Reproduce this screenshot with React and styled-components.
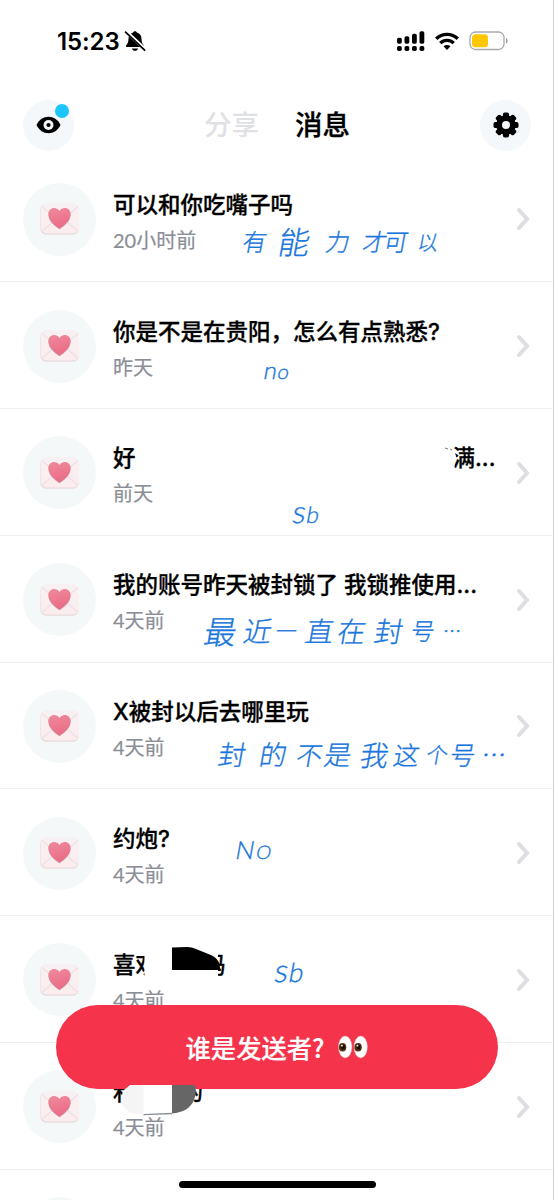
import React from "react";
import styled, { createGlobalStyle } from "styled-components";

const messages = [
  {
    title: ["可以和你吃嘴子吗"],
    time: "20小时前",
    note: { x: 243, y: 67, size: 24, marks: [["有", 0], ["能", 12, 1.3], ["力", 16], ["才", 13], ["可", -3], ["以", 10, 0.85]] },
  },
  {
    title: ["你是不是在贵阳，怎么有点熟悉?"],
    time: "昨天",
    note: { x: 264, y: 70, size: 24, latin: true, marks: [["n", 0], ["o", 1, 0.85]] },
  },
  {
    title: ["好", "满..."],
    gap: 317,
    time: "前天",
    note: { x: 293, y: 84, size: 24, latin: true, marks: [["s", 0, 1.3], ["b", 1, 0.95]] },
  },
  {
    title: ["我的账号昨天被封锁了 我锁推使用..."],
    time: "4天前",
    note: { x: 205, y: 76, size: 28, marks: [["最", 0, 1.15], ["近", 7], ["一", 4, 0.75], ["直", 9], ["在", 4], ["封", 9], ["号", 8, 0.85], ["…", 8, 0.65]] },
  },
  {
    title: ["X被封以后去哪里玩"],
    time: "4天前",
    note: { x: 219, y: 73, size: 27, marks: [["封", 0], ["的", 14], ["不", 10, 0.95], ["是", 2], ["我", 9, 1.05], ["这", 5, 0.95], ["个", 7, 0.8], ["号", 2, 0.95], ["…", 6, 0.9]] },
  },
  {
    title: ["约炮?"],
    time: "4天前",
    note: { x: 236, y: 42, size: 25, latin: true, marks: [["N", 0], ["O", 2, 0.75]] },
  },
  {
    title: ["喜欢", "吗"],
    gap: 45,
    time: "4天前",
    note: { x: 275, y: 36, size: 28, latin: true, marks: [["s", 0, 1.15], ["b", 1, 0.95]] },
  },
  { title: ["和", "的"], gap: 45, time: "4天前" },
  { title: [""], time: "" },
];

const BellOff = () => (
  <svg width="22" height="22" viewBox="0 0 22 22">
    <path d="M11 1.2c1 0 1.7.6 1.9 1.4 3 .8 4.5 3.2 4.6 6.2.1 3.5.9 4.8 2.2 6.4.6.8.3 1.8-.8 1.8H3.1c-1.1 0-1.4-1-.8-1.8C3.6 13.6 4.4 12.3 4.5 8.8c.1-3 1.6-5.4 4.6-6.2.2-.8.9-1.4 1.9-1.4z" />
    <path d="M8 18.4h6c-.4 1.500-1.500 2.400-3 2.400s-2.600-.9-3-2.400z" />
    <path d="M1.800 1.300 21 19.300" stroke="#fff" strokeWidth="3.600" />
    <path d="M1.600 2.200 20.600 20.200" stroke="#000" strokeWidth="1.800" strokeLinecap="round" />
  </svg>
);

const Signal = () => (
  <svg width="29" height="21" viewBox="0 0 29 21">
    {[6, 7.5, 10, 12.5].map((h, i) => (
      <g key={h}>
        <rect x={1 + i * 7.5} y={12.7 - h} width="4.8" height={h} rx="1.7" />
        <rect x={1 + i * 7.5} y="15" width="4.8" height="5" rx="1.7" />
      </g>
    ))}
  </svg>
);

const Wifi = () => (
  <svg width="24" height="19" viewBox="0 0 24 19">
    <g fill="none" stroke="#000" strokeWidth="3.4">
      <path d="M1.2 6.8C7.3.9 16.7.9 22.8 6.8" />
      <path d="M5.3 11.1C9.1 7.4 14.9 7.4 18.7 11.1" />
    </g>
    <path d="M8.500 14.300c2-1.800 5-1.800 7 0L12 17.900z" />
  </svg>
);

const Battery = () => (
  <svg width="40" height="20" viewBox="0 0 40 20">
    <rect x="1" y="1" width="34" height="17.5" rx="5.5" fill="#fff" stroke="#a8a8a8" strokeWidth="1.3" />
    <rect x="3" y="3.2" width="16" height="13" rx="3.5" fill="#ffc700" />
    <path d="M37 7v5.600c2.200-.9 2.200-4.700 0-5.600z" fill="#999" />
  </svg>
);

const Eye = () => (
  <svg width="25" height="18" viewBox="0 0 25 18">
    <path d="M.5 9C3.200 3.500 7.500.8 12.500.8S21.800 3.500 24.500 9c-2.700 5.500-7 8.200-12 8.200S3.200 14.500.5 9z" />
    <circle cx="12.5" cy="9" r="5" fill="#f5f8fa" />
    <circle cx="12.5" cy="9" r="2.1" />
  </svg>
);

const Gear = () => (
  <svg width="26" height="26" viewBox="-13 -13 26 26">
    {[0, 45, 90, 135].map((a) => (
      <rect key={a} x="-3.1" y="-12.5" width="6.2" height="25" rx="1.9" transform={`rotate(${a})`} />
    ))}
    <circle r="9.8" />
    <circle r="4" fill="#f5f8fa" />
  </svg>
);

const LoveLetter = () => (
  <svg width="40" height="34" viewBox="0 0 40 34">
    <defs>
      <linearGradient id="paper" x1="0" y1="0" x2="0" y2="1">
        <stop offset="0" stopColor="#f7f1f3" />
        <stop offset="1" stopColor="#fcecee" />
      </linearGradient>
      <linearGradient id="heart" x1="0" y1="0" x2="0.3" y2="1">
        <stop offset="0" stopColor="#ef8a9c" />
        <stop offset="1" stopColor="#ea6c86" />
      </linearGradient>
    </defs>
    <rect x="0.3" y="1.8" width="38.5" height="31" rx="6" fill="#e6dadc" />
    <rect x="0.8" y="1" width="38.2" height="30.5" rx="6" fill="url(#paper)" />
    <path d="M2 4.500 18 18q2 1.500 4 0L38 4.500M2.500 29 15 18M37.500 29 25 18" fill="none" stroke="#eee0e3" strokeWidth="1.3" />
    <path d="M19.500 27.300C13.500 23.500 8.500 18.500 8.500 12.700c0-6.500 7.300-8.400 11-3.200 3.700-5.200 11-3.300 11 3.200 0 5.800-5 10.800-11 14.600z" fill="#cf96a1" />
    <path d="M19.500 26.400C13.500 22.600 8.500 17.600 8.500 12.100c0-6.300 7.300-8.200 11-3.200 3.700-5 11-3.100 11 3.200 0 5.500-5 10.500-11 14.300z" fill="url(#heart)" />
  </svg>
);

const Chevron = () => (
  <svg width="14" height="24" viewBox="0 0 14 24">
    <path d="M3 3l8 9-8 9" fill="none" stroke="#dcdee1" strokeWidth="4" strokeLinecap="round" />
  </svg>
);

const Peek = () => (
  <svg width="30" height="24" viewBox="0 0 30 24">
    {[0, 15.5].map((x) => (
      <g key={x} transform={`translate(${x} 0)`}>
        <ellipse cx="7.2" cy="12" rx="6.7" ry="11" fill="#fff" stroke="#dcaeb4" strokeWidth="0.5" />
        <ellipse cx="4.6" cy="12.3" rx="3.7" ry="4.3" fill="#54310e" />
        <ellipse cx="5" cy="12" rx="2" ry="2.6" fill="#160b04" />
        <circle cx="4" cy="10.7" r="0.9" fill="#fff" />
      </g>
    ))}
  </svg>
);

const Message = ({ title, gap, time, note }) => {
  return (
    <Row>
      <Avatar>
        <LoveLetter />
      </Avatar>
      <Body>
        <Title $gap={gap}>
          {title.map((part) => (
            <span key={part}>{part}</span>
          ))}
        </Title>
        <Time>{time}</Time>
      </Body>
      <Chevron />
      {note && (
        <Note $x={note.x} $y={note.y} $size={note.size} $latin={note.latin}>
          {note.marks.map(([mark, space, stretch], i) => (
            <Mark key={i} $space={space} $scale={stretch}>
              {mark}
            </Mark>
          ))}
        </Note>
      )}
    </Row>
  );
};

const App = () => {
  return (
    <Screen>
      <GlobalStyle />
      <StatusBar>
        <Clock>15:23</Clock>
        <BellOff />
        <Indicators>
          <Signal />
          <Wifi />
          <Battery />
        </Indicators>
      </StatusBar>
      <Header>
        <RoundButton type="button">
          <Eye />
          <Dot />
        </RoundButton>
        <Tabs>
          <Tab>分享</Tab>
          <Tab $active>消息</Tab>
        </Tabs>
        <RoundButton type="button">
          <Gear />
        </RoundButton>
      </Header>
      <List>
        {messages.map((message, i) => (
          <Message key={i} {...message} />
        ))}
      </List>
      <Reveal type="button">
        <span>谁是发送者?</span>
        <Peek />
      </Reveal>
      <Smudges width="554" height="1200" viewBox="0 0 554 1200">
        <path d="M440 446h13l3 10-2 14h-14z" fill="#fff" />
        <path d="M445 448l3 1m2 0l2 1" stroke="#555" strokeWidth="0.8" />
        <path d="M144.500 950H218v31h-73.500z" fill="#fff" />
        <path d="M172 947.500l15-.5q5 0 9 2l16 6.500q6 3 7.500 9l1 5.500H172z" />
        <path d="M130 1085h15v29h-9q-13-2-14-13-1-7 2-11z" fill="#f5f5f5" />
        <path d="M143.500 1085H172v28h-28.500z" fill="#fff" />
        <path d="M143.500 1114.700l28.500-1.200" stroke="#8b8f98" strokeWidth="1.3" />
        <path d="M172 1085h23q2 8-1 15-5 12-22 13.500z" fill="#666" />
      </Smudges>
      <HomeBar />
    </Screen>
  );
};

const GlobalStyle = createGlobalStyle`
  body {
    margin: 0;
    background: #fff;
  }
  * {
    box-sizing: border-box;
  }
  svg {
    display: block;
    flex-shrink: 0;
  }
`;
const Screen = styled.main`
  position: relative;
  width: 554px;
  height: 1200px;
  overflow: hidden;
  background: #fff;
  border-right: 1px solid #cfcfcf;
  font-family: "Noto Sans CJK SC", sans-serif;
  color: #000;
`;
const StatusBar = styled.div`
  display: flex;
  align-items: center;
  height: 82px;
  padding: 0 44px 0 57px;
`;
const Clock = styled.span`
  width: 67px;
  padding-top: 2px;
  font: 600 24px/1 Inter, sans-serif;
  letter-spacing: -0.1px;
`;
const Indicators = styled.div`
  display: flex;
  align-items: center;
  gap: 10px;
  margin-left: auto;
`;
const Header = styled.header`
  display: flex;
  align-items: center;
  justify-content: space-between;
  height: 73.6px;
  padding: 13px 22px 0 23px;
`;
const RoundButton = styled.button`
  position: relative;
  display: flex;
  align-items: center;
  justify-content: center;
  width: 51px;
  height: 51px;
  padding: 0;
  border: 0;
  border-radius: 50%;
  background: #f5f8fa;
`;
const Dot = styled.span`
  position: absolute;
  top: 4px;
  right: 5px;
  width: 14px;
  height: 14px;
  border-radius: 50%;
  background: #1cc5fb;
`;
const Tabs = styled.nav`
  display: flex;
  gap: 36px;
  padding-bottom: 4px;
`;
const Tab = styled.span`
  font-size: 27.5px;
  line-height: 40px;
  font-weight: 500;
  color: ${({ $active }) => ($active ? "#000" : "#dfe1e5")};
  -webkit-text-stroke: ${({ $active }) => ($active ? "0.3px" : "0")};
`;
const List = styled.section`
  display: flex;
  flex-direction: column;
`;
const Row = styled.article`
  position: relative;
  display: flex;
  flex-shrink: 0;
  align-items: center;
  height: 126.75px;
  padding: 2px 23px 0;
  border-bottom: 1.5px solid #eff0f1;
`;
const Avatar = styled.div`
  display: flex;
  align-items: center;
  justify-content: center;
  width: 73px;
  height: 73px;
  flex-shrink: 0;
  border-radius: 50%;
  background: #f4f8f9;
`;
const Body = styled.div`
  flex: 1;
  min-width: 0;
  padding: 5px 0 0 17px;
`;
const Title = styled.div`
  display: flex;
  gap: ${({ $gap }) => $gap || 0}px;
  height: 36px;
  font-family: Inter, "Noto Sans CJK SC", sans-serif;
  font-size: 22.5px;
  line-height: 36px;
  font-weight: 500;
  white-space: nowrap;
  -webkit-text-stroke: 0.3px;
`;
const Time = styled.div`
  height: 34px;
  font-family: Lato, "Noto Sans CJK SC", sans-serif;
  font-size: 20px;
  line-height: 34px;
  color: #8b8e96;
  -webkit-text-stroke: 0.2px;
`;
const Note = styled.div`
  position: absolute;
  left: ${({ $x }) => $x}px;
  top: ${({ $y }) => $y}px;
  display: flex;
  align-items: ${({ $latin }) => ($latin ? "baseline" : "center")};
  height: 36px;
  font-family: ${({ $latin }) => ($latin ? "Lato, sans-serif" : '"Noto Sans CJK SC", sans-serif')};
  font-size: ${({ $size }) => $size}px;
  font-weight: 300;
  line-height: 36px;
  color: #1876dc;
  transform: skewX(-10deg);
  -webkit-text-stroke: 0.35px;
`;
const Mark = styled.span`
  margin-left: ${({ $space }) => $space}px;
  font-size: ${({ $scale }) => $scale || 1}em;
`;
const Reveal = styled.button`
  position: absolute;
  left: 56px;
  top: 1005px;
  display: flex;
  align-items: center;
  justify-content: center;
  gap: 14px;
  width: 442px;
  height: 84px;
  padding: 0 0 1px;
  border: 0;
  border-radius: 42px;
  background: #f5334b;
  color: #fff;
  font: 500 25.3px/36px "Noto Sans CJK SC", sans-serif;
  -webkit-text-stroke: 0.2px;
`;
const Smudges = styled.svg`
  position: absolute;
  left: 0;
  top: 0;
  pointer-events: none;
`;
const HomeBar = styled.div`
  position: absolute;
  left: 179px;
  top: 1181px;
  width: 197px;
  height: 7px;
  border-radius: 4px;
  background: #000;
`;
export default App;
